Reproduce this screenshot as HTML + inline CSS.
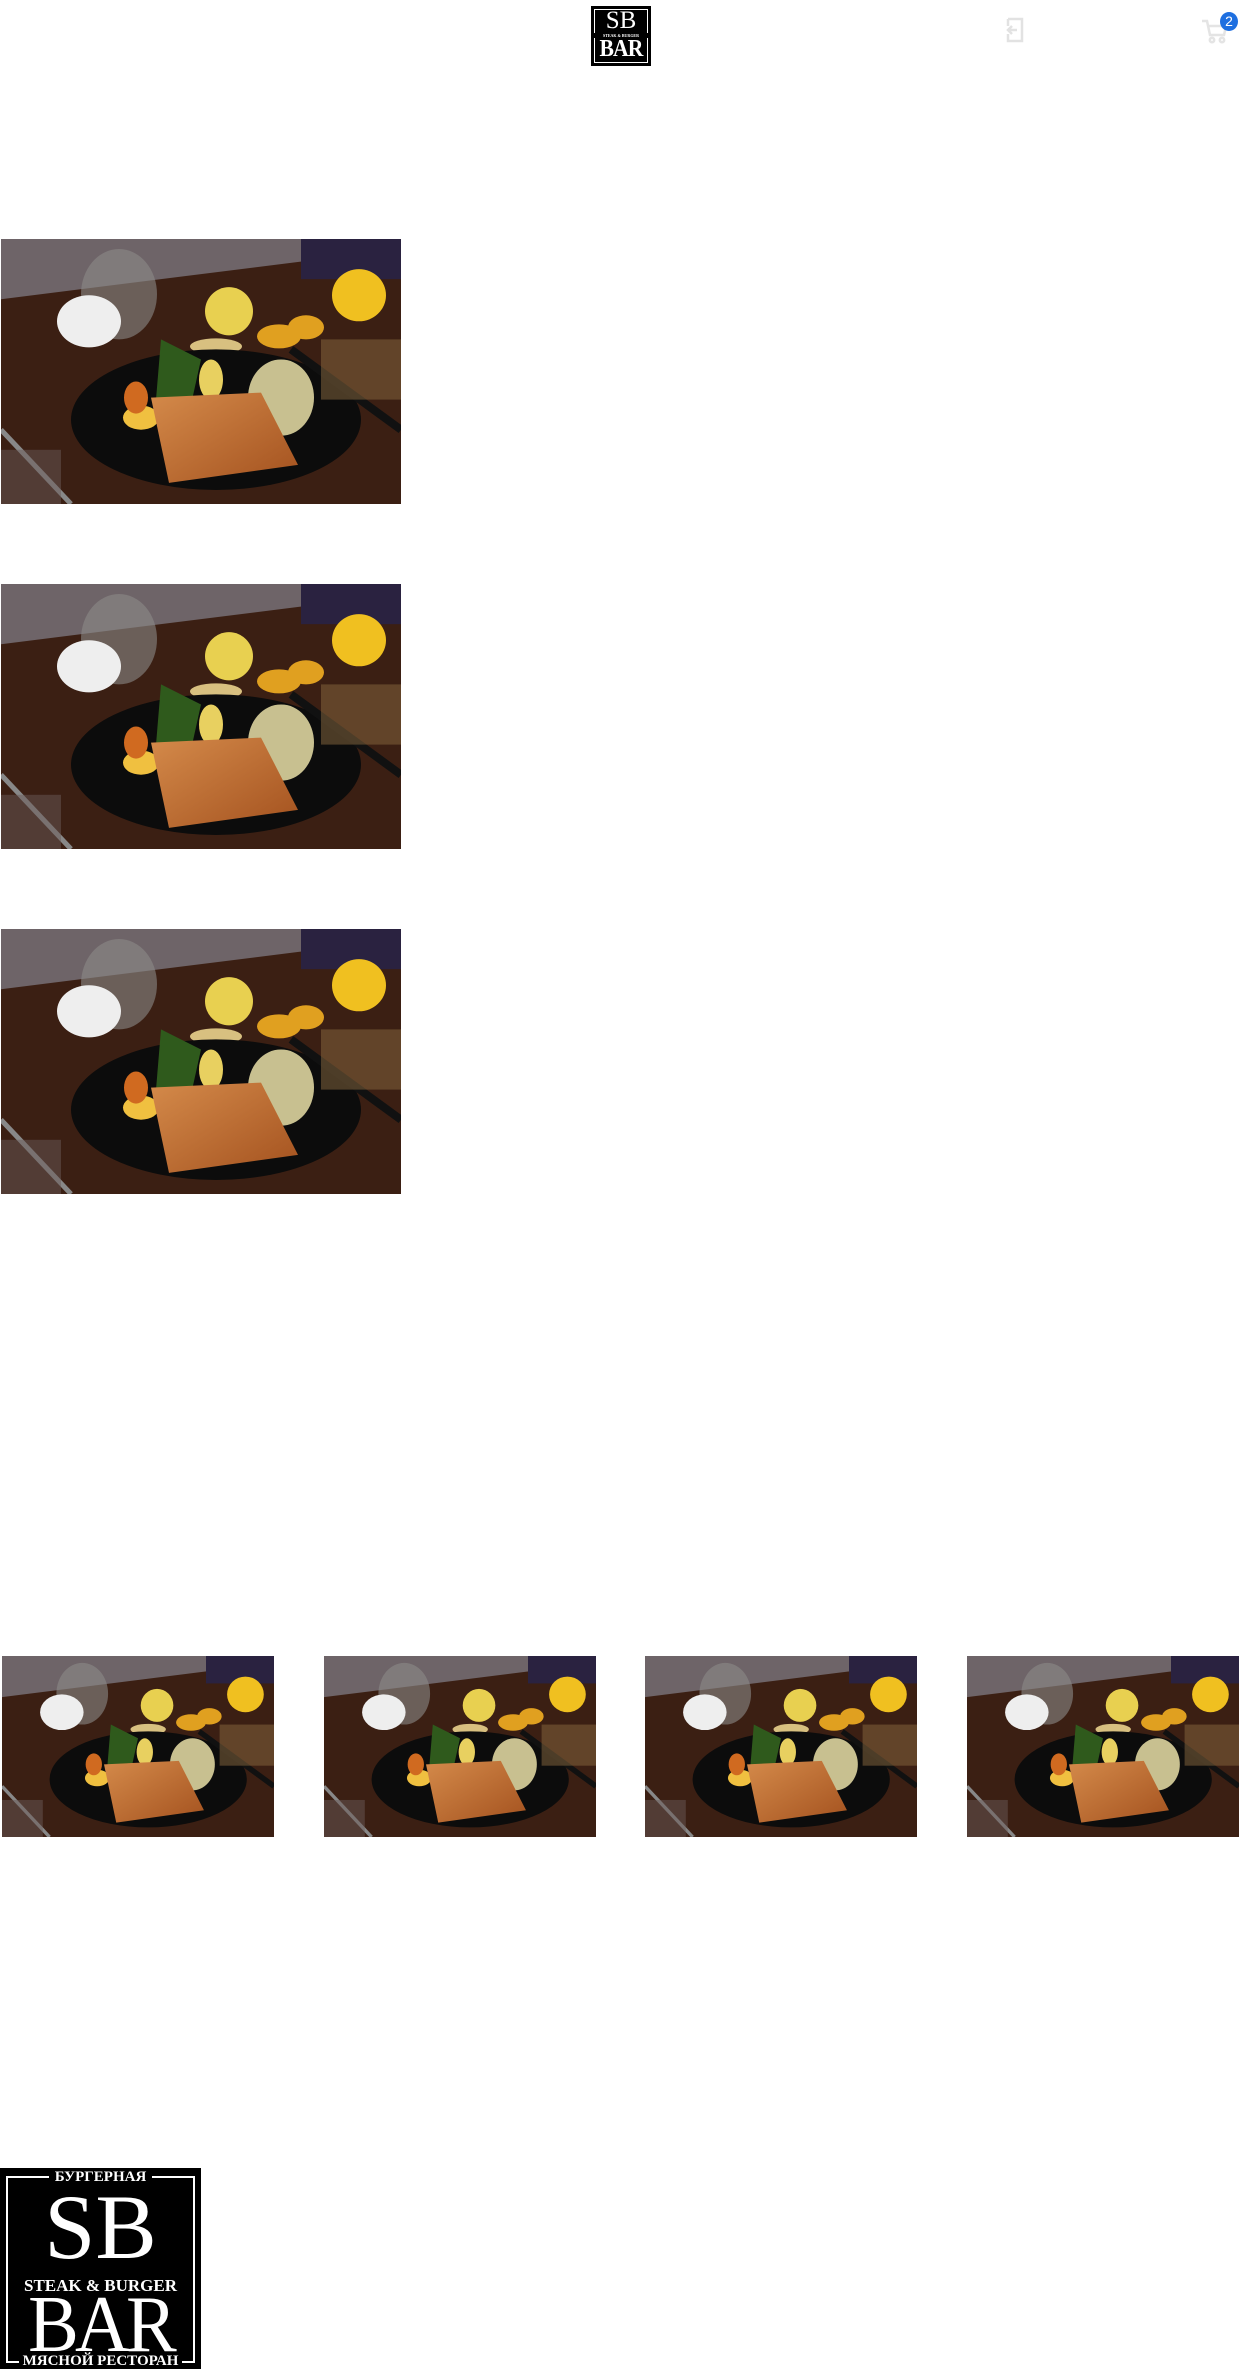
<!DOCTYPE html>
<html><head><meta charset="utf-8">
<style>
html,body{margin:0;padding:0;background:#fff;}
body{width:1241px;height:2369px;position:relative;overflow:hidden;font-family:"Liberation Serif","Noto Serif CJK SC",serif;}
.abs{position:absolute;}
.pic{position:absolute;display:block;}
.logo{position:absolute;background:#000;color:#fff;text-align:center;box-sizing:border-box;overflow:hidden;}
</style></head><body>
<svg width="0" height="0" style="position:absolute">
<defs>
<linearGradient id="fish" x1="0" y1="0" x2="1" y2="1"><stop offset="0" stop-color="#d48a4a"/><stop offset="1" stop-color="#a4521f"/></linearGradient>
<symbol id="food" viewBox="0 0 400 264" preserveAspectRatio="none">
<rect width="400" height="264" fill="#3a1e12"/>
<rect width="400" height="70" fill="#6e6468"/>
<polygon points="0,60 400,10 400,264 0,264" fill="#3b1f13"/>
<rect x="300" y="0" width="100" height="40" fill="#2a2240"/>
<ellipse cx="118" cy="55" rx="38" ry="45" fill="#8c8a88" opacity="0.6"/>
<ellipse cx="88" cy="82" rx="32" ry="26" fill="#eeeeee"/>
<ellipse cx="228" cy="72" rx="24" ry="24" fill="#e8d050"/>
<ellipse cx="358" cy="56" rx="27" ry="26" fill="#f0c020"/>
<ellipse cx="278" cy="97" rx="22" ry="12" fill="#e0a020"/>
<ellipse cx="305" cy="88" rx="18" ry="12" fill="#e0a020"/>
<ellipse cx="215" cy="107" rx="26" ry="8" fill="#d8c080"/>
<ellipse cx="215" cy="180" rx="145" ry="70" fill="#0c0c0c"/>
<path d="M160 100 L200 120 L190 165 L155 160 Z" fill="#2f5a1c"/>
<ellipse cx="280" cy="158" rx="33" ry="38" fill="#c8c090"/>
<ellipse cx="210" cy="140" rx="12" ry="20" fill="#e8d060"/>
<ellipse cx="140" cy="178" rx="18" ry="12" fill="#f0c040"/>
<ellipse cx="135" cy="158" rx="12" ry="16" fill="#d06a20"/>
<polygon points="150,158 260,153 297,225 168,243" fill="url(#fish)"/>
<path d="M0 190 L70 264" stroke="#888" stroke-width="5"/>
<rect x="0" y="210" width="60" height="54" fill="#6a5a58" opacity="0.5"/>
<path d="M290 110 L400 190" stroke="#111" stroke-width="8"/>
<rect x="320" y="100" width="80" height="60" fill="#8a6a40" opacity="0.5"/>
</symbol>
</defs></svg>

<div class="logo" style="left:591px;top:6px;width:60px;height:60px;">
 <div style="position:absolute;inset:3px;border:1px solid #fff;"></div>
 <div style="position:absolute;left:0;right:0;top:3px;font-size:25px;line-height:24px;">SB</div>
 <div style="position:absolute;left:0;right:0;top:27px;font-size:4px;font-weight:bold;background:#000;">STEAK &amp; BURGER</div>
 <div style="position:absolute;left:0;right:0;top:31px;font-size:24px;line-height:24px;letter-spacing:-1px;font-weight:bold;transform:scaleX(0.9);">BAR</div>
</div>

<svg class="abs" style="left:1004px;top:17px" width="22" height="26" viewBox="0 0 22 26" fill="none" stroke="#e2e2e2" stroke-width="2.5"><path d="M4 2 H18 V24 H4 V17 M4 9 V2"/><path d="M13 13 H5 M8 9 L4 13 L8 17"/></svg>
<svg class="abs" style="left:1201px;top:18px" width="28" height="26" viewBox="0 0 28 26" fill="none" stroke="#e4e4e4" stroke-width="2.5"><path d="M1 3 H6 L9 17 H23 L25 8 H7"/><circle cx="11" cy="22" r="2.2"/><circle cx="21" cy="22" r="2.2"/></svg>
<div class="abs" style="left:1220px;top:12px;width:18px;height:19px;border-radius:50%;background:#1e6fe0;color:#fff;font:14px/19px 'Liberation Sans',sans-serif;text-align:center;">2</div>

<svg class="pic" style="left:1px;top:239px" width="400" height="265"><use href="#food"/></svg>
<svg class="pic" style="left:1px;top:584px" width="400" height="265"><use href="#food"/></svg>
<svg class="pic" style="left:1px;top:929px" width="400" height="265"><use href="#food"/></svg>

<svg class="pic" style="left:2px;top:1656px" width="272" height="181"><use href="#food"/></svg>
<svg class="pic" style="left:324px;top:1656px" width="272" height="181"><use href="#food"/></svg>
<svg class="pic" style="left:645px;top:1656px" width="272" height="181"><use href="#food"/></svg>
<svg class="pic" style="left:967px;top:1656px" width="272" height="181"><use href="#food"/></svg>

<div class="logo" style="left:0;top:2168px;width:201px;height:201px;">
 <div style="position:absolute;left:6px;right:6px;top:8px;bottom:6px;border:2px solid #fff;"></div>
 <div style="position:absolute;left:0;right:0;top:0;"><span style="background:#000;padding:0 6px;font-size:15px;font-weight:bold;line-height:16px;">БУРГЕРНАЯ</span></div>
 <div style="position:absolute;left:0;right:0;top:14px;font-size:92px;line-height:90px;">SB</div>
 <div style="position:absolute;left:0;right:0;top:108px;"><span style="background:#000;padding:0 6px;font-size:17px;font-weight:bold;">STEAK &amp; BURGER</span></div>
 <div style="position:absolute;left:0;right:0;top:126px;font-size:80px;line-height:62px;letter-spacing:-4px;transform:scaleX(0.95);">BAR</div>
 <div style="position:absolute;left:0;right:0;top:184px;"><span style="background:#000;padding:0 4px;font-size:15px;font-weight:bold;line-height:17px;">МЯСНОЙ РЕСТОРАН</span></div>
</div>
</body></html>
